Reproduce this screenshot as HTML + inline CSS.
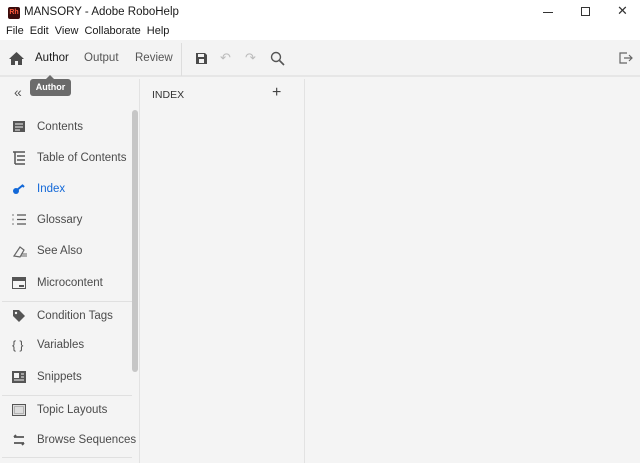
<!DOCTYPE html>
<html><head><style>
*{margin:0;padding:0;box-sizing:border-box}
body{width:640px;height:463px;overflow:hidden;background:#f4f4f4;font-family:"Liberation Sans",sans-serif;font-size:11px;color:#323232;position:relative}
.abs{position:absolute}
.title{left:0;top:0;width:640px;height:40px;background:#fff}
.tb{left:0;top:40px;width:640px;height:37px;background:#f3f3f3;border-bottom:2px solid #e6e6e6}
.item{position:absolute;left:0;width:132px;height:31px;display:flex;align-items:center}
.item span{position:absolute;left:37px;font-size:11.5px;color:#4b4b4b;white-space:nowrap}
.item svg{position:absolute;left:12px}
</style></head><body>
<div class="abs title"></div>
<div class="abs" style="left:8px;top:7px;width:12px;height:12px;background:#3a0b0b;border-radius:2px;color:#ff5a3c;font-size:7px;font-weight:bold;line-height:12px;text-align:center">Rh</div>
<div class="abs" style="left:24px;top:6px;font-size:11.5px;color:#1a1a1a">MANSORY - Adobe RoboHelp</div>
<div class="abs" style="left:6px;top:25px;font-size:11px;color:#1a1a1a;word-spacing:3px;white-space:nowrap">File Edit View Collaborate Help</div>
<div class="abs" style="left:543px;top:12px;width:10px;height:1px;background:#333"></div>
<div class="abs" style="left:581px;top:7px;width:9px;height:9px;border:1px solid #333"></div>
<div class="abs" style="left:617px;top:3px;font-size:13px;color:#333">✕</div>
<div class="abs tb"></div>
<svg class="abs" style="left:9px;top:52px" width="15" height="13"><path d="M7.5 0L0 7h2v6h4V9h3v4h4V7h2z" fill="#4b4b4b"/></svg>
<div class="abs" style="left:35px;top:52px;font-size:11.5px;color:#1a1a1a">Author</div>
<div class="abs" style="left:84px;top:52px;font-size:11.5px;color:#555">Output</div>
<div class="abs" style="left:135px;top:52px;font-size:11.5px;color:#555">Review</div>
<div class="abs" style="left:181px;top:43px;width:1px;height:33px;background:#ddd"></div>
<svg class="abs" style="left:196px;top:53px" width="11" height="11"><path d="M0 0h9l2 2v9H0z" fill="#4b4b4b"/><rect x="2" y="1" width="6" height="3" fill="#f3f3f3"/><rect x="3" y="6" width="5" height="4" fill="#f3f3f3"/></svg>
<div class="abs" style="left:220px;top:50px;font-size:13px;color:#bbb">↶</div>
<div class="abs" style="left:245px;top:50px;font-size:13px;color:#bbb">↷</div>
<svg class="abs" style="left:270px;top:51px" width="15" height="15"><circle cx="6" cy="6" r="4.5" fill="none" stroke="#555" stroke-width="1.4"/><path d="M9.5 9.5L14 14" stroke="#555" stroke-width="1.6"/></svg>
<svg class="abs" style="left:619px;top:52px" width="14" height="12"><path d="M8 1H1v10h7" fill="none" stroke="#666" stroke-width="1.2"/><path d="M5 6h8M10 3l3 3-3 3" fill="none" stroke="#666" stroke-width="1.2"/></svg>
<div class="abs" style="left:30px;top:79px;width:41px;height:17px;background:#6b6b6b;border-radius:3px;color:#fff;font-size:9px;font-weight:bold;line-height:17px;text-align:center">Author</div>
<div class="abs" style="left:46px;top:75px;width:0;height:0;border-left:4px solid transparent;border-right:4px solid transparent;border-bottom:4px solid #6b6b6b"></div>
<div class="abs" style="left:14px;top:84px;font-size:14px;color:#555">«</div>
<div class="abs" style="left:139px;top:79px;width:1px;height:384px;background:#e2e2e2"></div>
<div class="abs" style="left:304px;top:79px;width:1px;height:384px;background:#e2e2e2"></div>
<div class="abs" style="left:132px;top:110px;width:6px;height:262px;background:#c6c6c6;border-radius:3px"></div>
<div class="abs" style="left:152px;top:89px;font-size:10.5px;color:#333">INDEX</div>
<div class="abs" style="left:272px;top:84px;font-size:16px;color:#444">+</div>
<div class="abs" style="left:2px;top:301px;width:130px;height:1px;background:#e0e0e0"></div>
<div class="abs" style="left:2px;top:395px;width:130px;height:1px;background:#e0e0e0"></div>
<div class="abs" style="left:2px;top:457px;width:130px;height:1px;background:#e0e0e0"></div>
<div class="item" style="top:111px"><svg width="14" height="13"><rect x="1" y="1" width="12" height="11" fill="#555"/><path d="M3 4h8M3 7h8M3 10h5" stroke="#f4f4f4"/></svg><span>Contents</span></div>
<div class="item" style="top:142px"><svg width="14" height="14"><path d="M1 1h12M3 1v12M5 5h8M5 9h8M3 13h10" stroke="#555" stroke-width="1.5" fill="none"/></svg><span>Table of Contents</span></div>
<div class="item" style="top:173px"><svg width="14" height="12"><circle cx="4" cy="8" r="3" fill="#1268d8"/><path d="M5 7l6-5M10 2l2 2" stroke="#1268d8" stroke-width="2"/></svg><span style="color:#1268d8">Index</span></div>
<div class="item" style="top:204px"><svg width="14" height="13"><path d="M5 2h9M5 6.5h9M5 11h9" stroke="#555" stroke-width="1.3"/><path d="M1 1v2M1 5.5v2M1 10v2" stroke="#777"/></svg><span>Glossary</span></div>
<div class="item" style="top:235px"><svg width="16" height="14"><path d="M2 12l6-9 4 3-4 7z" fill="none" stroke="#666" stroke-width="1.2"/><path d="M9 10h6M9 12h6" stroke="#666"/></svg><span>See Also</span></div>
<div class="item" style="top:267px"><svg width="14" height="12"><rect x="0.5" y="0.5" width="13" height="11" fill="none" stroke="#555"/><rect x="1" y="1" width="12" height="3" fill="#555"/><path d="M7 9h5" stroke="#555" stroke-width="2"/></svg><span>Microcontent</span></div>
<div class="item" style="top:300px"><svg width="14" height="14"><path d="M1 1h6l6 6-6 6-6-6z" fill="#555"/><circle cx="4" cy="4" r="1.2" fill="#f4f4f4"/></svg><span>Condition Tags</span></div>
<div class="item" style="top:329px"><span style="left:12px;font-size:12px">{ }</span><span>Variables</span></div>
<div class="item" style="top:361px"><svg width="14" height="12"><rect width="14" height="12" fill="#555"/><rect x="2" y="2" width="5" height="5" fill="#f4f4f4"/><path d="M9 3h3M9 6h3M2 9h10" stroke="#f4f4f4"/></svg><span>Snippets</span></div>
<div class="item" style="top:394px"><svg width="14" height="12"><rect x="0.5" y="0.5" width="13" height="11" fill="#ddd" stroke="#555"/><rect x="2.5" y="2.5" width="9" height="7" fill="none" stroke="#888" stroke-dasharray="1 1"/></svg><span>Topic Layouts</span></div>
<div class="item" style="top:424px"><svg width="14" height="12"><path d="M2 3h10M2 3l2-2M12 9H2M12 9l-2 2" stroke="#555" stroke-width="1.8" fill="none"/></svg><span>Browse Sequences</span></div>
</body></html>
